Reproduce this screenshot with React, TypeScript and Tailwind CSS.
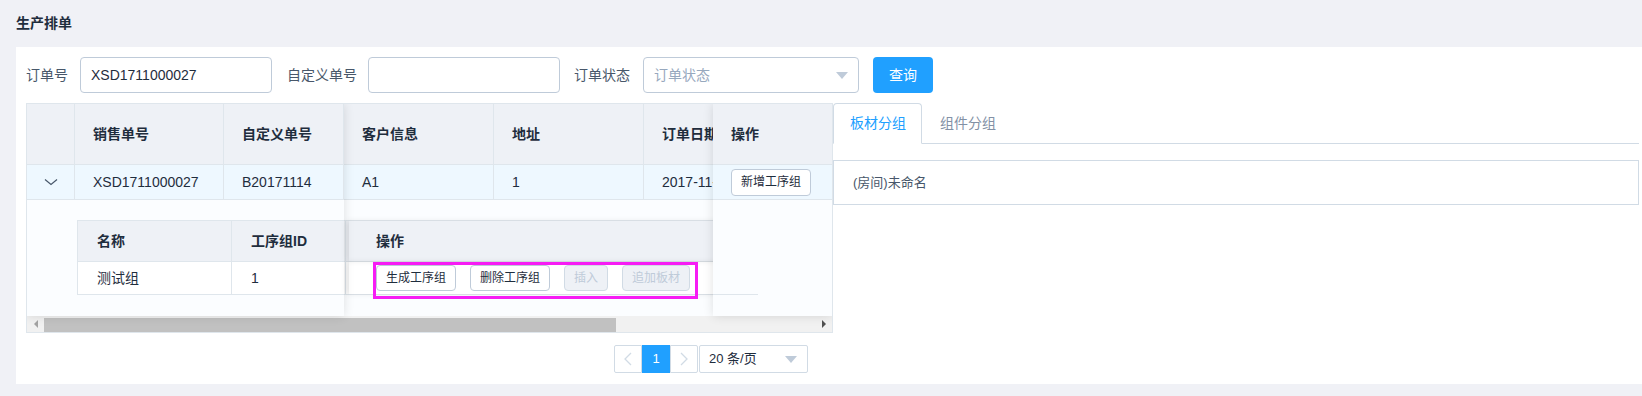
import React from 'react';

const BORDER = 'border-[#dfe6ec]';

function ChevronDown() {
  return (
    <svg width="14" height="8" viewBox="0 0 14 8" fill="none">
      <path d="M1 1.5L7 6.5L13 1.5" stroke="#48576a" strokeWidth="1.2" />
    </svg>
  );
}

function PagerArrow({ dir }: { dir: 'left' | 'right' }) {
  return (
    <svg width="8" height="14" viewBox="0 0 8 14" fill="none">
      <path d={dir === 'left' ? 'M7 1L1 7L7 13' : 'M1 1L7 7L1 13'} stroke="#d1dbe5" strokeWidth="1.3" />
    </svg>
  );
}

function Caret() {
  return <div className="w-0 h-0 border-l-[6px] border-r-[6px] border-t-[7px] border-l-transparent border-r-transparent border-t-[#bfcbd9]" />;
}

function SmallButton({ label, disabled, tall }: { label: string; disabled?: boolean; tall?: boolean }) {
  return (
    <button
      className={`shrink-0 px-[9px] rounded-[4px] border text-[12px] leading-none ${tall ? 'h-[27px]' : 'h-[26px]'} ${
        disabled ? 'bg-[#eef1f6] border-[#d1dbe5] text-[#bfcbd9]' : 'bg-white border-[#bfcbd9] text-[#1f2d3d]'
      }`}
    >
      {label}
    </button>
  );
}

const headerCols = [
  { title: '', w: 'w-[48px]' },
  { title: '销售单号', w: 'w-[149px]' },
  { title: '自定义单号', w: 'w-[120px]' },
  { title: '客户信息', w: 'w-[150px]' },
  { title: '地址', w: 'w-[150px]' },
  { title: '订单日期', w: 'w-[150px]' },
  { title: '备注', w: 'w-[150px]' },
];

const rowData = ['', 'XSD1711000027', 'B20171114', 'A1', '1', '2017-11-14 10:21:33', ''];

export default function App() {
  return (
    <div className="w-[1642px] h-[396px] overflow-hidden bg-[#f0f1f6] text-[#1f2d3d] font-['Liberation_Sans','Noto_Sans_CJK_SC',sans-serif]">
      <div className="h-[47px] pl-4 flex items-center text-[14px] font-bold text-[#1f2d3d]">生产排单</div>

      <div className="ml-4 h-[337px] bg-white pl-[10px] pt-[10px]">
        {/* search bar */}
        <div className="flex items-center h-[36px] text-[14px]">
          <span className="text-[#48576a] mr-[12px]">订单号</span>
          <div className="w-[192px] h-[36px] border border-[#bfcbd9] rounded-[4px] flex items-center pl-[10px]">XSD1711000027</div>
          <span className="text-[#48576a] ml-[15px] mr-[11px]">自定义单号</span>
          <div className="w-[192px] h-[36px] border border-[#bfcbd9] rounded-[4px]" />
          <span className="text-[#48576a] ml-[14px] mr-[13px]">订单状态</span>
          <div className="w-[216px] h-[36px] border border-[#bfcbd9] rounded-[4px] flex items-center justify-between pl-[10px] pr-[10px]">
            <span className="text-[#97a8be]">订单状态</span>
            <Caret />
          </div>
          <button className="ml-[14px] w-[60px] h-[36px] rounded-[4px] bg-[#20a0ff] text-white text-[14px]">查询</button>
        </div>

        <div className="flex mt-[10px]">
          {/* main table */}
          <div className={`relative w-[807px] h-[230px] border ${BORDER} overflow-hidden shrink-0`}>
            <div className={`flex h-[61px] bg-[#eef1f6] border-b ${BORDER} font-bold text-[14px]`}>
              {headerCols.map((c, i) => (
                <div key={i} className={`${c.w} shrink-0 border-r ${BORDER} flex items-center pl-[18px]`}>
                  {c.title}
                </div>
              ))}
            </div>
            <div className={`flex h-[35px] bg-[#eef8ff] border-b ${BORDER} text-[14px]`}>
              {headerCols.map((c, i) => (
                <div key={i} className={`${c.w} shrink-0 border-r ${BORDER} flex items-center ${i === 0 ? 'justify-center' : 'pl-[18px]'} whitespace-nowrap overflow-hidden`}>
                  {i === 0 ? <ChevronDown /> : rowData[i]}
                </div>
              ))}
            </div>

            {/* expanded row */}
            <div className="h-[116px] bg-[#fbfdff] pt-[20px] pl-[50px]">
              <div className="w-[681px] text-[14px]">
                <div className={`flex h-[42px] border-t border-b border-l ${BORDER} bg-[#eef1f6] font-bold`}>
                  <div className={`w-[154px] shrink-0 border-r ${BORDER} flex items-center pl-[19px]`}>名称</div>
                  <div className={`w-[114px] shrink-0 border-r ${BORDER} flex items-center pl-[19px]`}>工序组ID</div>
                  <div className="ml-[3px] flex-1 flex items-center pl-[27px] shadow-[-3px_0_6px_rgba(0,0,0,0.08)]">操作</div>
                </div>
                <div className={`flex h-[33px] border-b border-l ${BORDER} bg-white`}>
                  <div className={`w-[154px] shrink-0 border-r ${BORDER} flex items-center pl-[19px]`}>测试组</div>
                  <div className={`w-[114px] shrink-0 border-r ${BORDER} flex items-center pl-[19px]`}>1</div>
                  <div className="ml-[3px] flex-1 flex items-center pl-[27px] shadow-[-3px_0_6px_rgba(0,0,0,0.08)]">
                    <div className="relative flex gap-[14px]">
                      <SmallButton label="生成工序组" />
                      <SmallButton label="删除工序组" />
                      <SmallButton label="插入" disabled />
                      <SmallButton label="追加板材" disabled />
                      <div className="absolute left-[-3px] top-[-3px] w-[325px] h-[37px] border-[3px] border-[#f61cf4] pointer-events-none" />
                    </div>
                  </div>
                </div>
              </div>
            </div>

            {/* horizontal scrollbar */}
            <div className="flex h-[16px] bg-[#f1f1f1]">
              <div className="w-[17px] flex items-center justify-center">
                <div className="w-0 h-0 border-t-[4px] border-b-[4px] border-r-[4px] border-t-transparent border-b-transparent border-r-[#a3a3a3]" />
              </div>
              <div className="w-[572px] h-[14px] self-end bg-[#c1c1c1]" />
              <div className="flex-1" />
              <div className="w-[17px] flex items-center justify-center">
                <div className="w-0 h-0 border-t-[4px] border-b-[4px] border-l-[4px] border-t-transparent border-b-transparent border-l-[#505050]" />
              </div>
            </div>

            {/* fixed left shadow */}
            <div className="absolute left-0 top-0 w-[317px] h-[212px] shadow-[0_0_10px_rgba(0,0,0,0.12)] pointer-events-none" />

            {/* fixed right column */}
            <div className="absolute right-0 top-0 w-[119px] h-[212px] shadow-[0_0_10px_rgba(0,0,0,0.12)] bg-[#fbfdff]">
              <div className={`h-[61px] bg-[#eef1f6] border-b ${BORDER} flex items-center pl-[18px] font-bold text-[14px]`}>操作</div>
              <div className={`h-[35px] bg-[#eef8ff] border-b ${BORDER} flex items-center pl-[18px]`}>
                <SmallButton label="新增工序组" tall />
              </div>
              <div className={`mt-[94px] w-[45px] border-b ${BORDER}`} />
            </div>
          </div>

          {/* right tabs panel */}
          <div className="w-[806px] shrink-0">
            <div className="flex h-[41px] border-b border-[#d1dbe5] text-[14px]">
              <div className="w-[89px] h-[41px] shrink-0 border border-[#d1dbe5] border-b-white rounded-t-[4px] flex items-center pl-[16px] text-[#20a0ff]">板材分组</div>
              <div className="flex items-center pl-[18px] text-[#8391a5]">组件分组</div>
            </div>
            <div className="mt-[16px] h-[45px] border border-[#d1dbe5] flex items-center pl-[19px] text-[13px] text-[#48576a]">(房间)未命名</div>
          </div>
        </div>

        {/* pagination */}
        <div className="flex mt-[12px] ml-[588px] h-[28px] text-[13px]">
          <div className="w-[28px] h-[28px] border border-[#d1dbe5] rounded-l-[2px] flex items-center justify-center">
            <PagerArrow dir="left" />
          </div>
          <div className="w-[28px] h-[28px] bg-[#20a0ff] text-white flex items-center justify-center">1</div>
          <div className="w-[28px] h-[28px] border border-[#d1dbe5] rounded-r-[2px] flex items-center justify-center">
            <PagerArrow dir="right" />
          </div>
          <div className="ml-[1px] w-[109px] h-[28px] border border-[#d1dbe5] rounded-[2px] flex items-center justify-between pl-[9px] pr-[10px]">
            <span>20 条/页</span>
            <Caret />
          </div>
        </div>
      </div>
    </div>
  );
}
